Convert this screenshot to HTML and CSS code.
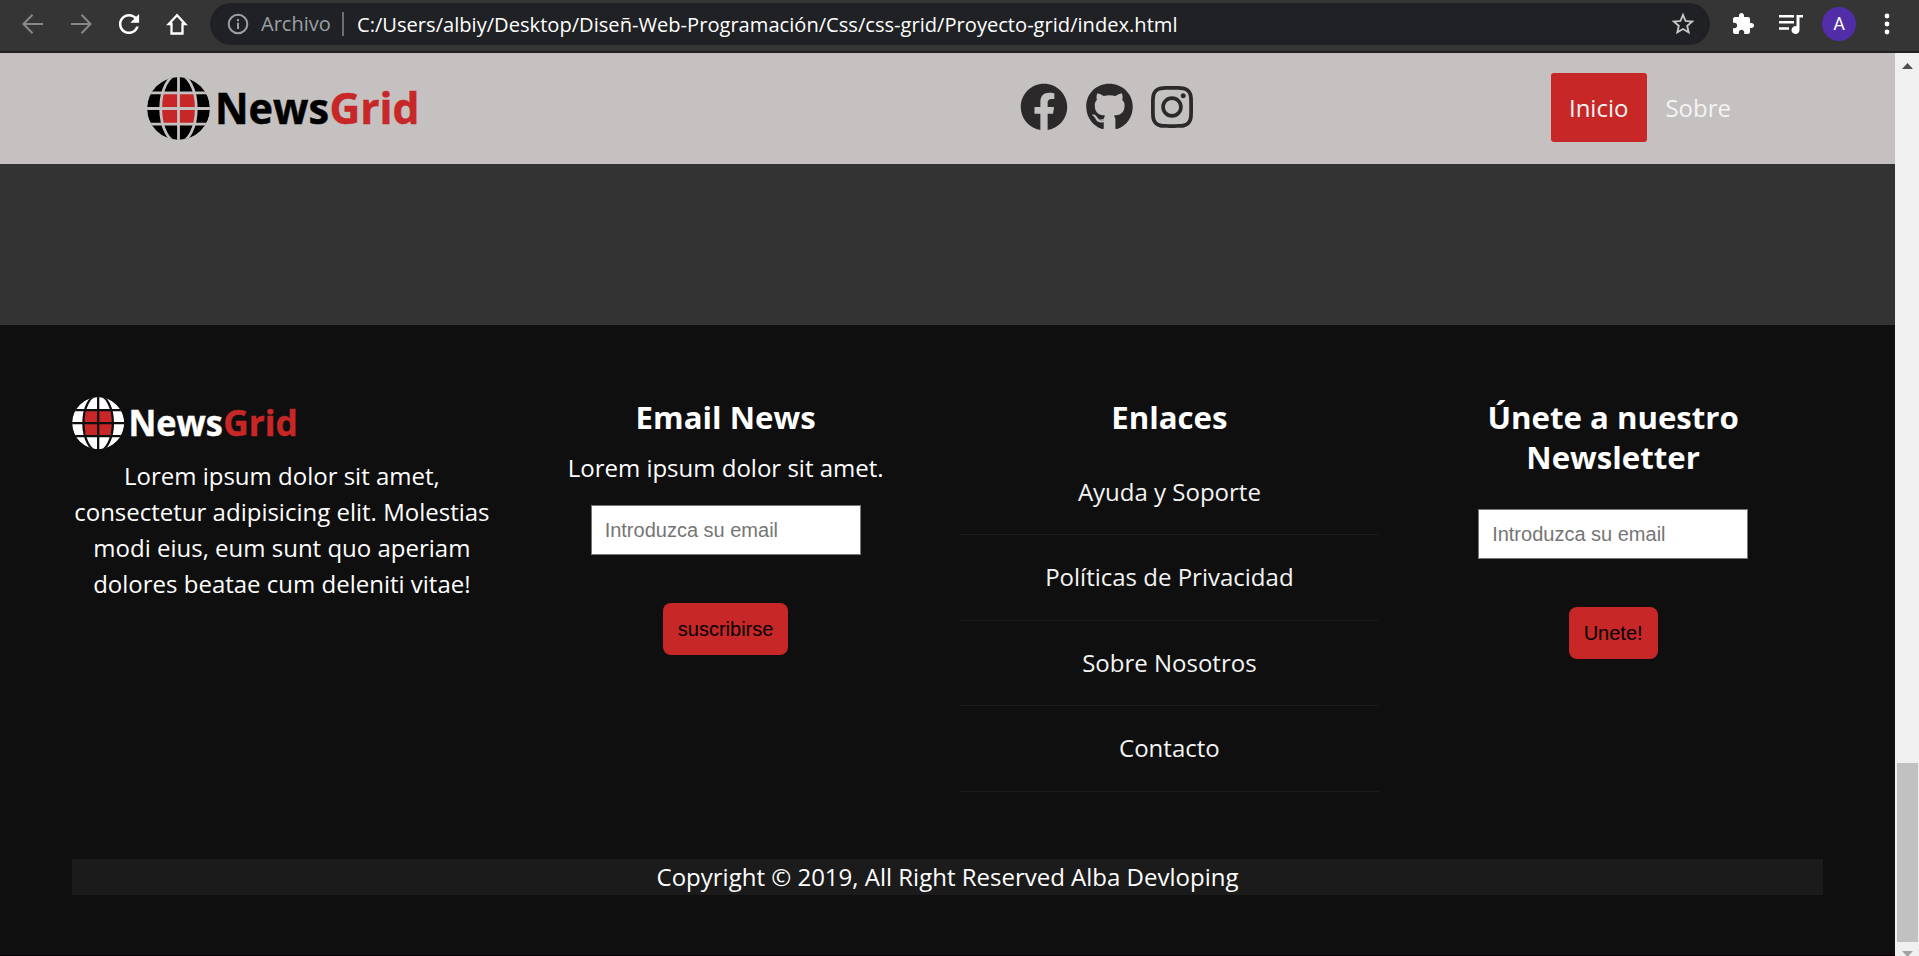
FILE: index.html
```html
<!DOCTYPE html>
<html lang="es">
<head>
<meta charset="utf-8">
<title>NewsGrid</title>
<link rel="stylesheet" href="styles.css">
</head>
<body>
<div class="browser">
  <div class="toolbar">
    <div class="nav-buttons">
      <svg class="icon dim" viewBox="0 0 24 24"><path d="M22 12H3M11.500 2.700L2.500 12l9 9.300" fill="none" stroke="currentColor" stroke-width="2"/></svg>
      <svg class="icon dim" viewBox="0 0 24 24"><path d="M2 12h19M12.500 2.700L21.500 12l-9 9.300" fill="none" stroke="currentColor" stroke-width="2"/></svg>
      <svg class="icon" viewBox="2.500 2.500 19 19"><path fill="currentColor" d="M17.650 6.350C16.200 4.900 14.210 4 12 4c-4.420 0-7.990 3.580-7.990 8s3.570 8 7.990 8c3.730 0 6.840-2.550 7.730-6h-2.080c-.82 2.330-3.040 4-5.650 4-3.310 0-6-2.690-6-6s2.690-6 6-6c1.660 0 3.140.69 4.220 1.780L13 11h7V4l-2.350 2.350z"/></svg>
      <svg class="icon" viewBox="0 0 24 24"><path d="M12 3.300L3.800 12H6.500v9.500h11V12h2.700z" fill="none" stroke="currentColor" stroke-width="2.300"/></svg>
    </div>
    <div class="omnibox">
      <svg class="info" viewBox="0 0 22 22"><circle cx="11" cy="11" r="9.300" fill="none" stroke="currentColor" stroke-width="2"/><path fill="currentColor" d="M10 9.700h2V16h-2zM10 6h2v2.200h-2z"/></svg>
      <span class="scheme">Archivo</span>
      <span class="divider"></span>
      <span class="url">C:/Users/albiy/Desktop/Diseñ-Web-Programación/Css/css-grid/Proyecto-grid/index.html</span>
      <svg class="star" viewBox="1.500 1.500 21 21"><path fill="currentColor" d="M22 9.240l-7.190-.62L12 2 9.190 8.630 2 9.240l5.460 4.730L5.820 21 12 17.270 18.180 21l-1.630-7.030L22 9.240zM12 15.400l-3.760 2.270 1-4.280-3.320-2.880 4.380-.38L12 6.100l1.710 4.040 4.380.38-3.320 2.880 1 4.280L12 15.400z"/></svg>
    </div>
    <svg class="icon puzzle" viewBox="0 0 24 24"><path fill="currentColor" d="M20.500 11H19V7c0-1.100-.9-2-2-2h-4V3.500C13 2.120 11.880 1 10.500 1S8 2.120 8 3.500V5H4c-1.100 0-1.990.9-1.990 2v3.800H3.500c1.490 0 2.700 1.210 2.700 2.700s-1.210 2.700-2.700 2.700H2V20c0 1.100.9 2 2 2h3.800v-1.500c0-1.490 1.210-2.700 2.700-2.700s2.700 1.210 2.700 2.700V22H17c1.100 0 2-.9 2-2v-4h1.500c1.380 0 2.500-1.120 2.500-2.500S21.880 11 20.500 11z"/></svg>
    <svg class="music" viewBox="0 0 26 22"><path fill="currentColor" d="M1 2h15v2.400H1zM1 8h15v2.400H1zM1 14.300h10v2.400H1zM18.500 2H25v2.500h-3.500V17a4 4 0 1 1-3-3.800z"/></svg>
    <span class="avatar">A</span>
    <svg class="dots" viewBox="0 0 6 24"><g fill="currentColor"><circle cx="3" cy="4" r="2.400"/><circle cx="3" cy="12" r="2.400"/><circle cx="3" cy="20" r="2.400"/></g></svg>
  </div>

  <div class="viewport">
    <div class="page">
      <header class="header">
        <svg class="logo" viewBox="0 0 280 64">
          <clipPath id="disc"><circle cx="31.500" cy="31.500" r="31.500"/></clipPath>
          <g clip-path="url(#disc)">
            <circle class="globe" cx="31.500" cy="31.500" r="31.500"/>
            <path class="core" d="M17 15.500h29q6 16 0 31.500H17q-6-15.500 0-31.500z"/>
            <path class="grid-lines" d="M31.500-1v65M-1 31.500h65M-1 15.800h65M-1 47.200h65"/>
            <ellipse class="grid-lines" cx="31.500" cy="31.500" rx="17.800" ry="34"/>
          </g>
          <text class="word" x="68" y="47" textLength="114" lengthAdjust="spacingAndGlyphs">News</text>
          <text class="word red" x="182.500" y="47" textLength="90" lengthAdjust="spacingAndGlyphs">Grid</text>
        </svg>
        <div class="social">
          <svg class="facebook" viewBox="0 0 512 512"><path fill="currentColor" d="M504 256C504 119 393 8 256 8S8 119 8 256c0 123.780 90.690 226.380 209.250 245V327.690h-63V256h63v-54.640c0-62.150 37-96.480 93.670-96.480 27.140 0 55.520 4.840 55.520 4.840v61h-31.280c-30.800 0-40.410 19.120-40.410 38.730V256h68.780l-11 71.690h-57.780V501C413.310 482.380 504 379.780 504 256z"/></svg>
          <svg class="github" viewBox="0 0 496 512"><path fill="currentColor" d="M165.900 397.400c0 2-2.300 3.600-5.200 3.600-3.300.3-5.600-1.300-5.600-3.600 0-2 2.300-3.600 5.200-3.600 3-.3 5.600 1.300 5.600 3.600zm-31.100-4.500c-.7 2 1.300 4.300 4.300 4.900 2.600 1 5.600 0 6.200-2s-1.300-4.300-4.300-5.200c-2.600-.7-5.500.3-6.200 2.300zm44.200-1.700c-2.900.7-4.900 2.600-4.600 4.900.3 2 2.900 3.300 5.900 2.600 2.900-.7 4.900-2.600 4.600-4.600-.3-1.900-3-3.200-5.900-2.900zM244.800 8C106.100 8 0 113.300 0 252c0 110.900 69.800 205.800 169.500 239.200 12.800 2.300 17.300-5.600 17.300-12.100 0-6.200-.3-40.400-.3-61.400 0 0-70 15-84.700-29.800 0 0-11.400-29.100-27.800-36.600 0 0-22.900-15.700 1.600-15.400 0 0 24.900 2 38.600 25.800 21.900 38.600 58.600 27.500 72.900 20.900 2.300-16 8.800-27.100 16-33.700-55.900-6.200-112.300-14.300-112.300-110.500 0-27.500 7.600-41.300 23.600-58.900-2.600-6.500-11.100-33.300 2.600-67.900 20.900-6.500 69 27 69 27 20-5.600 41.500-8.500 62.800-8.500s42.800 2.900 62.800 8.500c0 0 48.100-33.600 69-27 13.700 34.700 5.200 61.400 2.600 67.900 16 17.700 25.800 31.500 25.800 58.900 0 96.500-58.900 104.200-114.800 110.500 9.200 7.900 17 22.900 17 46.400 0 33.700-.3 75.400-.3 83.600 0 6.500 4.600 14.400 17.300 12.100C428.200 457.800 496 362.900 496 252 496 113.300 383.500 8 244.800 8z"/></svg>
          <svg class="instagram" viewBox="0 0 448 512"><path fill="currentColor" d="M224.100 141c-63.600 0-114.900 51.300-114.900 114.900s51.300 114.900 114.900 114.900S339 319.500 339 255.900 287.700 141 224.100 141zm0 189.600c-41.100 0-74.700-33.500-74.700-74.700s33.500-74.700 74.700-74.700 74.700 33.500 74.700 74.700-33.600 74.700-74.700 74.700zm146.400-194.300c0 14.900-12 26.800-26.800 26.800-14.900 0-26.800-12-26.800-26.800s12-26.800 26.800-26.800 26.800 12 26.800 26.800zm76.100 27.200c-1.700-35.900-9.900-67.700-36.200-93.900-26.200-26.200-58-34.400-93.900-36.200-37-2.100-147.900-2.100-184.900 0-35.800 1.700-67.600 9.900-93.900 36.100s-34.400 58-36.200 93.900c-2.100 37-2.100 147.900 0 184.900 1.700 35.900 9.900 67.700 36.200 93.900s58 34.400 93.900 36.200c37 2.100 147.900 2.100 184.900 0 35.900-1.700 67.700-9.900 93.900-36.200 26.200-26.200 34.400-58 36.200-93.900 2.100-37 2.100-147.800 0-184.800zM398.800 388c-7.800 19.600-22.900 34.700-42.600 42.600-29.500 11.700-99.500 9-132.100 9s-102.700 2.600-132.100-9c-19.600-7.800-34.700-22.900-42.600-42.600-11.700-29.500-9-99.500-9-132.100s-2.600-102.700 9-132.100c7.800-19.600 22.900-34.700 42.600-42.600 29.500-11.700 99.500-9 132.100-9s102.700-2.600 132.100 9c19.600 7.800 34.700 22.900 42.600 42.600 11.700 29.500 9 99.500 9 132.100s2.700 102.700-9 132.100z"/></svg>
        </div>
        <nav class="menu">
          <a class="menu-link current">Inicio</a>
          <a class="menu-link">Sobre</a>
        </nav>
      </header>

      <section class="spacer"></section>

      <footer class="footer">
        <div class="columns">
          <div class="column">
            <svg class="logo logo-footer" viewBox="0 0 280 64">
              <g clip-path="url(#disc)">
                <circle class="globe" cx="31.500" cy="31.500" r="31.500"/>
                <path class="core" d="M17 15.500h29q6 16 0 31.500H17q-6-15.500 0-31.500z"/>
                <path class="grid-lines" d="M31.500-1v65M-1 31.500h65M-1 15.800h65M-1 47.200h65"/>
                <ellipse class="grid-lines" cx="31.500" cy="31.500" rx="17.800" ry="34"/>
              </g>
              <text class="word" x="68" y="47" textLength="114" lengthAdjust="spacingAndGlyphs">News</text>
              <text class="word red" x="182.500" y="47" textLength="90" lengthAdjust="spacingAndGlyphs">Grid</text>
            </svg>
            <p class="text">Lorem ipsum dolor sit amet, consectetur adipisicing elit. Molestias modi eius, eum sunt quo aperiam dolores beatae cum deleniti vitae!</p>
          </div>
          <div class="column">
            <h2 class="title">Email News</h2>
            <p class="text">Lorem ipsum dolor sit amet.</p>
            <form class="form">
              <input class="field" type="email" placeholder="Introduzca su email">
              <button class="button" type="button">suscribirse</button>
            </form>
          </div>
          <div class="column">
            <h2 class="title">Enlaces</h2>
            <ul class="links">
              <li class="link">Ayuda y Soporte</li>
              <li class="link">Políticas de Privacidad</li>
              <li class="link">Sobre Nosotros</li>
              <li class="link">Contacto</li>
            </ul>
          </div>
          <div class="column">
            <h2 class="title">Únete a nuestro Newsletter</h2>
            <form class="form form-join">
              <input class="field" type="email" placeholder="Introduzca su email">
              <button class="button" type="button">Unete!</button>
            </form>
          </div>
        </div>
        <p class="copyright">Copyright © 2019, All Right Reserved Alba Devloping</p>
      </footer>
    </div>
    <div class="scrollbar">
      <svg class="arrow" viewBox="0 0 11 6"><path fill="#505050" d="M5.500 0L11 6H0z"/></svg>
      <div class="thumb"></div>
      <svg class="arrow" viewBox="0 0 11 6"><path fill="#a3a3a3" d="M0 0h11L5.500 6z"/></svg>
    </div>
  </div>
</div>
</body>
</html>
```
FILE: styles.css
```css
* { box-sizing: border-box; margin: 0; padding: 0; }

body {
  overflow: hidden;
  font-family: "Open Sans", sans-serif;
  font-size: 24px;
  line-height: 36px;
  color: #fff;
  background: #0f0f0f;
}

svg { display: block; flex: none; }

.browser { display: flex; flex-direction: column; height: 956px; overflow: hidden; }

/* Browser toolbar */
.toolbar {
  display: flex;
  align-items: center;
  flex: none;
  height: 53px;
  padding: 0 29px 3px 21px;
  background: #353535;
  border-bottom: 2px solid #222021;
}
.nav-buttons { display: flex; gap: 24px; width: 189px; flex: none; }
.icon { width: 24px; height: 24px; }
.dim { color: #888; }
.omnibox {
  display: flex;
  align-items: center;
  width: 1500px;
  height: 42px;
  padding: 0 15px 0 17px;
  border-radius: 21px;
  background: #202124;
  flex: none;
}
.info { width: 22px; height: 22px; color: #9aa0a6; }
.scheme { width: 70px; margin-left: 12px; font-size: 20px; color: #9aa0a6; }
.divider { width: 2px; height: 24px; margin: 0 13px 0 11px; background: #6b6e72; }
.url { font-size: 20.13px; white-space: nowrap; }
.star { width: 24px; height: 24px; margin-left: auto; color: #c8c8c8; }
.puzzle { margin-left: 21px; }
.music { width: 26px; height: 22px; margin-left: 23px; }
.avatar {
  width: 34px;
  height: 34px;
  margin-left: 18px;
  border-radius: 50%;
  background: #512da8;
  font: 18px/34px Roboto, sans-serif;
  text-align: center;
}
.dots { width: 6px; height: 24px; margin-left: auto; }

/* Page viewport */
.viewport { display: flex; flex: 1; min-height: 0; }
.page { display: flex; flex-direction: column; flex: 1; }

.header {
  display: flex;
  align-items: center;
  height: 111px;
  padding: 0 146px 0 147px;
  background: #c5c1c0;
  flex: none;
}
.logo { width: 280px; height: 64px; overflow: visible; color: #c5c1c0; }
.globe, .word { fill: #000; }
.core, .red { fill: #c72727; }
.grid-lines { fill: none; stroke: currentColor; stroke-width: 2.8; }
.word { font: 700 43px "Open Sans", sans-serif; stroke: #000; stroke-width: .5; }
.word.red { fill: #c72727; stroke: #c72727; }

.social { display: flex; align-items: center; gap: 18px; margin-left: 593px; padding-bottom: 4px; color: #2b2929; }
.facebook { width: 48px; height: 48px; }
.github { width: 47px; height: 48px; }
.instagram { width: 42px; height: 48px; }

.menu { display: flex; margin-left: auto; padding-bottom: 2px; }
.menu-link { padding: 17px 18px 16px; color: #f4f4f4; }
.current { padding-right: 19px; background: #c72727; border-radius: 3px; }

.spacer { height: 161px; background: #333; flex: none; }

/* Footer */
.footer { flex: 1; padding: 72px 72px 0; background: #0f0f0f; border-bottom: 1px solid #060004; }
.columns { display: grid; grid-template-columns: repeat(4, 1fr); gap: 24px; height: 462px; }
.column { text-align: center; }
.logo-footer { width: 232px; height: 53px; margin-bottom: 8px; color: #0f0f0f; }
.logo-footer .globe { fill: #fff; }
.logo-footer .word:not(.red) { fill: #fff; stroke: #fff; }
.title { font-size: 31.2px; line-height: 40px; margin-bottom: 12.5px; }
.form { display: flex; flex-direction: column; align-items: center; gap: 48px; margin-top: 19px; }
.form-join { margin-top: 32px; }
.field {
  width: 270px;
  height: 50px;
  padding: 1px 12px 0 13px;
  border: 1px solid #767676;
  font: 20px "Liberation Sans", sans-serif;
  background: #fff;
}
.field::placeholder { color: #757575; }
.button {
  height: 52px;
  padding: 1px 15px 0;
  border: 0;
  border-radius: 8px;
  font: 20px "Liberation Sans", sans-serif;
  color: #000;
  background: #c72727;
}
.links { list-style: none; }
.link { height: 85.5px; padding-top: 24px; border-bottom: 1px solid #1b1b1b; color: #f4f4f4; }
.copyright { text-align: center; background: #1b1b1b; }

/* Scrollbar */
.scrollbar {
  display: flex;
  flex-direction: column;
  align-items: center;
  width: 24px;
  padding: 10px 0 0 1px;
  background: #f0f0f0;
}
.arrow { width: 11px; height: 6px; }
.thumb { width: 21px; height: 179px; margin: 694px 0 9px; background: #c1c1c1; flex: none; }
```
